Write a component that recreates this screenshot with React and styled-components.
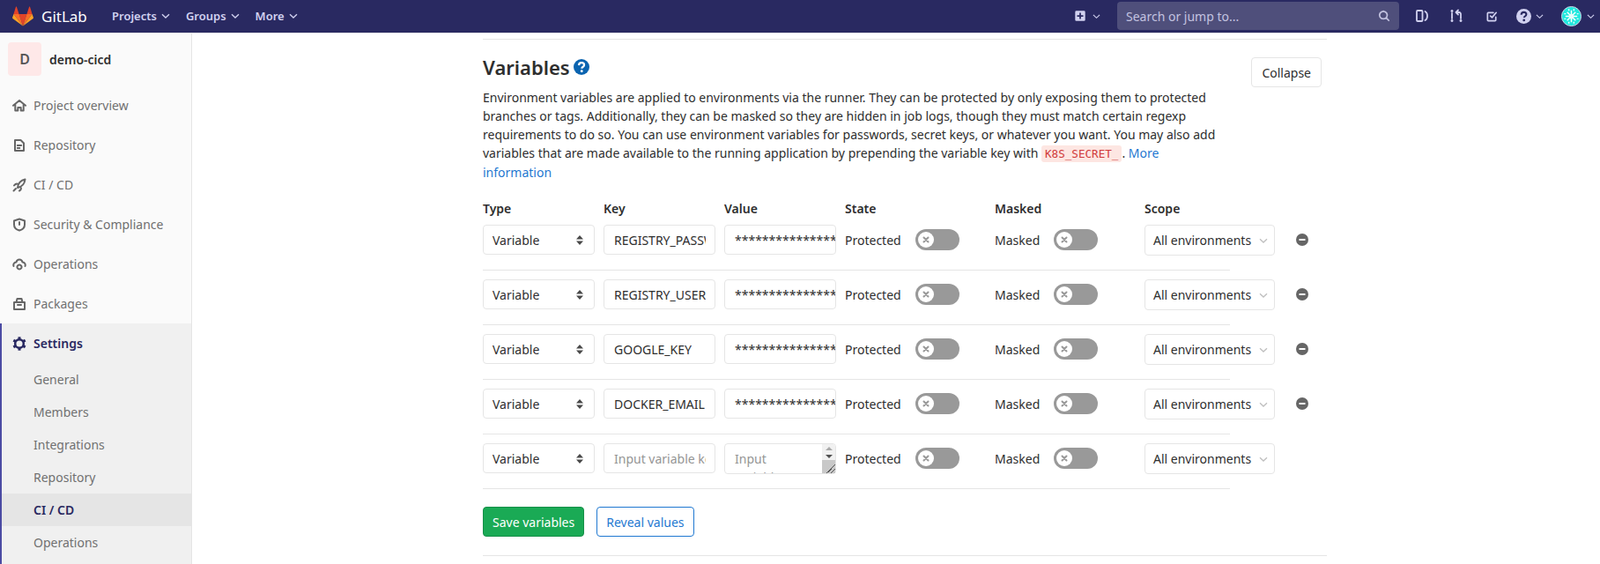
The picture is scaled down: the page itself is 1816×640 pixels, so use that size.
import React from "react";
import styled, { createGlobalStyle } from "styled-components";

const GlobalStyle = createGlobalStyle`
  html, body {
    margin: 0;
    height: 640px;
    overflow: hidden;
    background: #fff;
    font-family: "Noto Sans", sans-serif;
    font-size: 14px;
    color: #2e2e2e;
  }
  * { box-sizing: border-box; }
`;

const Navbar = styled.header`
  display: flex;
  align-items: center;
  height: 38px;
  padding: 0 0 1px 14px;
  background: #292961;
  border-bottom: 1px solid #e5e5e5;
`;
const Brand = styled.div`
  display: flex;
  align-items: center;
  gap: 9px;
  width: 113px;
  color: #fff;
  font-size: 17px;
`;
const NavMenu = styled.div`
  display: flex;
  align-items: center;
  gap: 5px;
  margin-right: 18px;
  color: #d1d1f0;
  font-size: 13px;
  font-weight: 600;
`;
const NavRight = styled.div`
  display: flex;
  align-items: center;
  margin-left: auto;
`;
const NavIcon = styled.div`
  display: flex;
  align-items: center;
  gap: ${(p) => p.$gap || 0}px;
  width: ${(p) => p.$w}px;
  color: #d1d1f0;
`;
const Search = styled.div`
  display: flex;
  align-items: center;
  justify-content: space-between;
  width: 320px;
  height: 32px;
  margin-right: 18px;
  padding: 0 10px;
  border-radius: 4px;
  background: #4f4f7b;
  color: #c3c3e0;
  font-size: 14px;
`;
const Body = styled.div`
  display: flex;
  height: 602px;
`;
const Sidebar = styled.aside`
  flex: none;
  width: 218px;
  background: #fafafa;
  border-right: 1px solid #e5e5e5;
  overflow: hidden;
`;
const ProjectHead = styled.div`
  display: flex;
  align-items: flex-start;
  gap: 9px;
  height: 59px;
  padding: 10px 0 0 9px;
  font-weight: 600;
  line-height: 39px;
  color: #2e2e2e;
`;
const ProjectAvatar = styled.div`
  display: flex;
  align-items: center;
  justify-content: center;
  width: 38px;
  height: 38px;
  border-radius: 4px;
  background: #fee8e8;
  color: #555;
  font-size: 16px;
  font-weight: 600;
`;
const NavList = styled.nav`
  padding-top: 0;
`;
const NavItem = styled.div`
  display: flex;
  align-items: center;
  gap: 8px;
  height: 45px;
  padding-left: 14px;
  color: ${(p) => (p.$active ? "#292961" : "#707070")};
  font-weight: ${(p) => (p.$active ? 600 : 400)};
  svg { color: ${(p) => (p.$active ? "#292961" : "#666")}; }
`;
const ActiveSection = styled.div`
  height: 100%;
  background: #f0f0f0;
  border-left: 2px solid #4b4ba3;
  ${NavItem} { padding-left: 12px; }
`;
const SubItem = styled.div`
  display: flex;
  align-items: center;
  height: 37px;
  padding-left: 36px;
  color: ${(p) => (p.$active ? "#292961" : "#707070")};
  font-weight: ${(p) => (p.$active ? 600 : 400)};
  background: ${(p) => (p.$active ? "#e5e5e5" : "transparent")};
`;
const SubList = styled.div`
  padding-top: 0;
`;
const Main = styled.main`
  flex: 1;
  min-width: 0;
  padding: 6px 0 0 330px;
`;
const Section = styled.section`
  width: 958px;
  height: 587px;
  border-top: 1px solid #e5e5e5;
  border-bottom: 1px solid #e5e5e5;
`;
const SectionHead = styled.div`
  display: flex;
  justify-content: space-between;
  align-items: flex-start;
  padding: 19px 6px 0 0;
`;
const CollapseButtonWrap = styled.div`
  padding-top: 1px;
`;
const Intro = styled.div`
  width: 840px;
`;
const Title = styled.h4`
  display: flex;
  align-items: center;
  gap: 4px;
  margin: 0 0 12px;
  font-size: 22px;
  line-height: 24px;
  font-weight: 600;
  color: #2e2e2e;
`;
const Description = styled.p`
  margin: 0;
  font-size: 14px;
  line-height: 21px;
`;
const Link = styled.a`
  color: #1f78d1;
`;
const Code = styled.code`
  padding: 2px 4px;
  border-radius: 3px;
  background: #fde6e2;
  color: #d13b3b;
  font-family: "DejaVu Sans Mono", monospace;
  font-size: 12.6px;
`;
const Button = styled.button`
  height: 34px;
  padding: 0 11px;
  border: 1px solid #e5e5e5;
  border-radius: 4px;
  background: #fff;
  color: #2e2e2e;
  font: 14px "Noto Sans", sans-serif;
`;
const SaveButton = styled(Button)`
  padding: 0 10px;
  background: #1aaa55;
  border-color: #168f48;
  color: #fff;
`;
const RevealButton = styled(Button)`
  padding: 0 10px;
  margin-left: 14px;
  border-color: #1f78d1;
  color: #1f78d1;
`;
const Table = styled.div`
  margin-top: 20px;
`;
const Grid = styled.div`
  display: grid;
  grid-template-columns: 127px 127px 127px 160px 160px 148px 42px;
  column-gap: 10px;
  align-items: center;
`;
const HeadRow = styled(Grid)`
  height: 21px;
  margin-bottom: 8px;
  font-weight: 600;
`;
const VarRow = styled(Grid)`
  width: 848px;
  height: 52px;
  margin-bottom: 10px;
  align-items: start;
  border-bottom: 1px solid #e5e5e5;
`;
const DropButton = styled.div`
  display: flex;
  align-items: center;
  justify-content: space-between;
  height: 34px;
  padding: 0 12px 0 10px;
  border: 1px solid #e5e5e5;
  border-radius: 4px;
  background: #fff;
  white-space: nowrap;
  overflow: hidden;
  svg { flex: none; color: #4a4a4a; }
`;
const ScopeButton = styled(DropButton)`
  height: 35px;
  padding: 0 7px 0 9px;
  svg { color: #bfbfbf; }
`;
const TextInput = styled.input`
  width: 127px;
  height: 34px;
  padding: 0 10px 0 11px;
  border: 1px solid #e5e5e5;
  border-radius: 4px;
  color: #2e2e2e;
  font: 14px "Noto Sans", sans-serif;
  outline: 0;
  &::placeholder { color: #959595; opacity: 1; }
`;
const ValueInput = styled(TextInput)`
  padding-right: 0;
`;
const ValueBox = styled.div`
  position: relative;
  width: 127px;
  height: 35px;
`;
const ValueArea = styled.textarea`
  display: block;
  width: 127px;
  height: 35px;
  padding: 6px 26px 6px 11px;
  border: 1px solid #e5e5e5;
  border-radius: 4px;
  font: 14px/21px "Noto Sans", sans-serif;
  overflow: hidden;
  resize: both;
  outline: 0;
  &::placeholder { color: #959595; opacity: 1; }
  &::-webkit-resizer {
    background-color: #c8c8c8;
    background-image: linear-gradient(135deg, transparent 66%, #555 66%, #555 70%, transparent 70%, transparent 82%, #555 82%, #555 86%, transparent 86%);
  }
`;
const ScrollStrip = styled.div`
  position: absolute;
  top: 1px;
  right: 1px;
  display: flex;
  align-items: center;
  justify-content: center;
  width: 15px;
  height: 18px;
  border-top-right-radius: 3px;
  background: #f1f1f1;
  pointer-events: none;
`;
const Flag = styled.div`
  display: flex;
  align-items: center;
  gap: 16px;
  height: 34px;
  padding-top: 1px;
`;
const Toggle = styled.div`
  display: flex;
  align-items: center;
  width: 50px;
  height: 24px;
  margin-top: -1px;
  padding-left: 3px;
  border-radius: 12px;
  background: #999;
`;
const Knob = styled.div`
  display: flex;
  align-items: center;
  justify-content: center;
  width: 18px;
  height: 18px;
  border-radius: 50%;
  background: #fff;
  color: #999;
`;
const RemoveCell = styled.div`
  display: flex;
  justify-content: center;
  align-items: center;
  height: 34px;
  color: #666;
`;
const Actions = styled.div`
  display: flex;
  margin-top: 20px;
`;

const Chevron = ({ size = 10 }) => (
  <svg width={size} height={size} viewBox="0 0 10 10" fill="none" stroke="currentColor" strokeWidth="1.3">
    <path d="M1 3.2 5 7l4-3.800" />
  </svg>
);
const Updown = () => (
  <svg width="8" height="11" viewBox="0 0 8 11" fill="currentColor">
    <path d="M4 0 8 4.500H0zM4 11 0 6.500h8z" />
  </svg>
);
const ScrollArrows = () => (
  <svg width="8" height="13" viewBox="0 0 8 13">
    <path d="M4 0 8 4H0z" fill="#aaa" />
    <path d="M4 13 0 9h8z" fill="#505050" />
  </svg>
);
const Tanuki = () => (
  <svg width="24" height="23" viewBox="0 0 24 23">
    <path fill="#e24329" d="M12 22.500 16.400 9H7.600z" />
    <path fill="#fc6d26" d="M12 22.500 7.600 9H1.400z" />
    <path fill="#fca326" d="M1.400 9 .1 13.100c-.1.400 0 .8.300 1L12 22.500z" />
    <path fill="#e24329" d="M1.400 9h6.200L4.900.8c-.1-.4-.7-.4-.9 0z" />
    <path fill="#fc6d26" d="M12 22.500 16.400 9h6.200z" />
    <path fill="#fca326" d="m22.600 9 1.300 4.100c.1.400 0 .8-.3 1L12 22.500z" />
    <path fill="#e24329" d="M22.600 9h-6.200L19.100.8c.1-.4.700-.4.900 0z" />
  </svg>
);
const Glyph = ({ d, size = 16, fill = false, sw = 2 }) => (
  <svg width={size} height={size} viewBox="0 0 16 16" fill={fill ? "currentColor" : "none"} stroke={fill ? "none" : "currentColor"} strokeWidth={sw} strokeLinejoin="round" strokeLinecap="round">
    <path d={d} fillRule="evenodd" />
  </svg>
);
const GearIcon = () => (
  <svg width="16" height="16" viewBox="0 0 16 16" fill="none" stroke="currentColor">
    <circle cx="8" cy="8" r="4.800" strokeWidth="2.500" />
    {[0, 60, 120, 180, 240, 300].map((angle) => (
      <path key={angle} d="M8 .3V3" strokeWidth="3" transform={`rotate(${angle} 8 8)`} />
    ))}
  </svg>
);
const CloseMark = () => (
  <svg width="8" height="8" viewBox="0 0 8 8" stroke="currentColor" strokeWidth="2" strokeLinecap="round">
    <path d="M1.500 1.500l5 5M6.500 1.500l-5 5" />
  </svg>
);
const HelpIcon = ({ color, mark, size }) => (
  <svg width={size} height={size} viewBox="0 0 16 16">
    <circle cx="8" cy="8" r="8" fill={color} />
    <path d="M5.300 6.300C5.400 4.600 6.500 3.600 8 3.600c1.600 0 2.700 1 2.700 2.300 0 1.100-.7 1.600-1.400 2.100-.7.500-1 .8-1 1.500" fill="none" stroke={mark} strokeWidth="2" />
    <circle cx="8.200" cy="12.200" r="1.300" fill={mark} />
  </svg>
);
const UserAvatar = () => (
  <svg width="23" height="23" viewBox="0 0 24 24">
    <circle cx="12" cy="12" r="11.500" fill="#1fe8de" stroke="#d5d5e8" strokeWidth="1" />
    <path d="M12 5v14M5 12h14M7 7l10 10M17 7 7 17" stroke="#fff" strokeWidth="1.500" />
    <circle cx="12" cy="12" r="3" fill="#e6fbfa" />
    <path d="M3.500 9h2M18.500 15h2M9 3.500v2M15 18.500v2M15 3.500v2M9 18.500v2M3.500 15h2M18.500 9h2" stroke="#eafffe" strokeWidth="1.500" />
  </svg>
);

const icons = {
  home: "M1 7.800 8 2l7 5.800M3.300 6.500V13.500h3V10h3.400v3.500h3V6.500",
  doc: "M3 2h6.500L13 5.500V14H3zM5.800 8h4.400M5.800 11h2.500",
  rocket: "M6 11C6 6 10 2.500 14.500 1.500 14 6.500 10.500 10 6 11zM2 8.500C3 7 4 6.500 5.500 6.500M8 14.500c1.500-.7 2-1.800 2-3M1.500 14.500 4 12",
  shield: "M8 1.500 14 3.500v4.500c0 3-2.500 5.500-6 6.500-3.500-1-6-3.500-6-6.500V3.500zM8 5v3",
  cloud: "M1.500 10C.5 7 3 5.500 4.500 5.500 5 3.500 6.500 2.500 8 2.500s3 1 3.500 3c1.500 0 4 1.500 3 4.500M8 8.500a2.500 2.500 0 1 0 .01 0",
  pack: "M2 6h12v8H2zM4.500 6l1-4h5l1 4M6 9h4",
  search: "M7 2a5 5 0 1 0 .01 0M10.800 10.800 14 14",
  board: "M3 2h4.500A1 1 0 0 1 8.500 3v10a1 1 0 0 1-1 1H3a1 1 0 0 1-1-1V3a1 1 0 0 1 1-1zM11.500 3c2 1 2.500 3 2.500 5s-.5 4-2.500 5",
  merge: "M3 2a.6.6 0 1 0 .01 0M3 5v6M3 13a.6.6 0 1 0 .01 0M13 13a.6.6 0 1 0 .01 0M13 11V6c0-1.300-.7-2-2-2H8M10 1.500 7.500 4l2.500 2.500",
  todo: "M12.500 9v3.500a1 1 0 0 1-1 1h-8a1 1 0 0 1-1-1v-8a1 1 0 0 1 1-1h6M6 7.500 8 9.500l5-6",
  plus: "M3 1.500h10A1.500 1.500 0 0 1 14.500 3v10a1.500 1.500 0 0 1-1.500 1.500H3A1.500 1.500 0 0 1 1.500 13V3A1.500 1.500 0 0 1 3 1.500zM7 4h2v3h3v2H9v3H7V9H4V7h3z",
  minus: "M8 0a8 8 0 1 1 0 16A8 8 0 0 1 8 0zM4 6.800v2.400h8V6.800z",
};

const topItems = [
  ["home", "Project overview"],
  ["doc", "Repository"],
  ["rocket", "CI / CD"],
  ["shield", "Security & Compliance"],
  ["cloud", "Operations"],
  ["pack", "Packages"],
];
const subItems = ["General", "Members", "Integrations", "Repository", "CI / CD", "Operations"];
const variables = ["REGISTRY_PASSWORD", "REGISTRY_USER", "GOOGLE_KEY", "DOCKER_EMAIL"];
const mask = "*".repeat(20);

const VariableFlags = () => (
  <>
    <Flag>
      Protected
      <Toggle><Knob><CloseMark /></Knob></Toggle>
    </Flag>
    <Flag>
      Masked
      <Toggle><Knob><CloseMark /></Knob></Toggle>
    </Flag>
    <ScopeButton>All environments <Chevron /></ScopeButton>
  </>
);

export default function App() {
  return (
    <>
      <GlobalStyle />
      <Navbar>
        <Brand><Tanuki /> GitLab</Brand>
        <NavMenu>Projects <Chevron /></NavMenu>
        <NavMenu>Groups <Chevron /></NavMenu>
        <NavMenu>More <Chevron /></NavMenu>
        <NavRight>
          <NavIcon $w={49} $gap={7}><Glyph d={icons.plus} fill size={14} /><Chevron size={9} /></NavIcon>
          <Search>
            Search or jump to...
            <Glyph d={icons.search} size={14} />
          </Search>
          <NavIcon $w={39}><Glyph d={icons.board} size={16} sw={1.8} /></NavIcon>
          <NavIcon $w={41}><Glyph d={icons.merge} size={16} sw={1.8} /></NavIcon>
          <NavIcon $w={35}><Glyph d={icons.todo} size={15} sw={1.8} /></NavIcon>
          <NavIcon $w={51} $gap={5}><HelpIcon color="#d1d1f0" mark="#292961" size={17} /><Chevron size={9} /></NavIcon>
          <NavIcon $w={44} $gap={6}><UserAvatar /><Chevron size={9} /></NavIcon>
        </NavRight>
      </Navbar>
      <Body>
        <Sidebar>
          <ProjectHead><ProjectAvatar>D</ProjectAvatar>demo-cicd</ProjectHead>
          <NavList>
            {topItems.map(([icon, label]) => (
              <NavItem key={label}><Glyph d={icons[icon]} />{label}</NavItem>
            ))}
          </NavList>
          <ActiveSection>
            <NavItem $active><GearIcon />Settings</NavItem>
            <SubList>
              {subItems.map((label) => (
                <SubItem key={label} $active={label === "CI / CD"}>{label}</SubItem>
              ))}
            </SubList>
          </ActiveSection>
        </Sidebar>
        <Main>
          <Section>
            <SectionHead>
              <Intro>
                <Title>Variables <HelpIcon color="#0b64b0" mark="#fff" size={18} /></Title>
                <Description>
                  Environment variables are applied to environments via the runner. They can be protected by only exposing them to protected branches or tags. Additionally, they can be masked so they are hidden in job logs, though they must match certain regexp requirements to do so. You can use environment variables for passwords, secret keys, or whatever you want. You may also add variables that are made available to the running application by prepending the variable key with <Code>K8S_SECRET_</Code>. <Link>More information</Link>
                </Description>
              </Intro>
              <CollapseButtonWrap><Button>Collapse</Button></CollapseButtonWrap>
            </SectionHead>
            <Table>
              <HeadRow>
                <span>Type</span><span>Key</span><span>Value</span><span>State</span><span>Masked</span><span>Scope</span>
              </HeadRow>
              {variables.map((key) => (
                <VarRow key={key}>
                  <DropButton>Variable <Updown /></DropButton>
                  <TextInput defaultValue={key} />
                  <ValueInput defaultValue={mask} />
                  <VariableFlags />
                  <RemoveCell><Glyph d={icons.minus} fill size={14} /></RemoveCell>
                </VarRow>
              ))}
              <VarRow>
                <DropButton>Variable <Updown /></DropButton>
                <TextInput placeholder="Input variable key" />
                <ValueBox>
                  <ValueArea placeholder="Input variable value" />
                  <ScrollStrip><ScrollArrows /></ScrollStrip>
                </ValueBox>
                <VariableFlags />
              </VarRow>
            </Table>
            <Actions>
              <SaveButton>Save variables</SaveButton>
              <RevealButton>Reveal values</RevealButton>
            </Actions>
          </Section>
        </Main>
      </Body>
    </>
  );
}
